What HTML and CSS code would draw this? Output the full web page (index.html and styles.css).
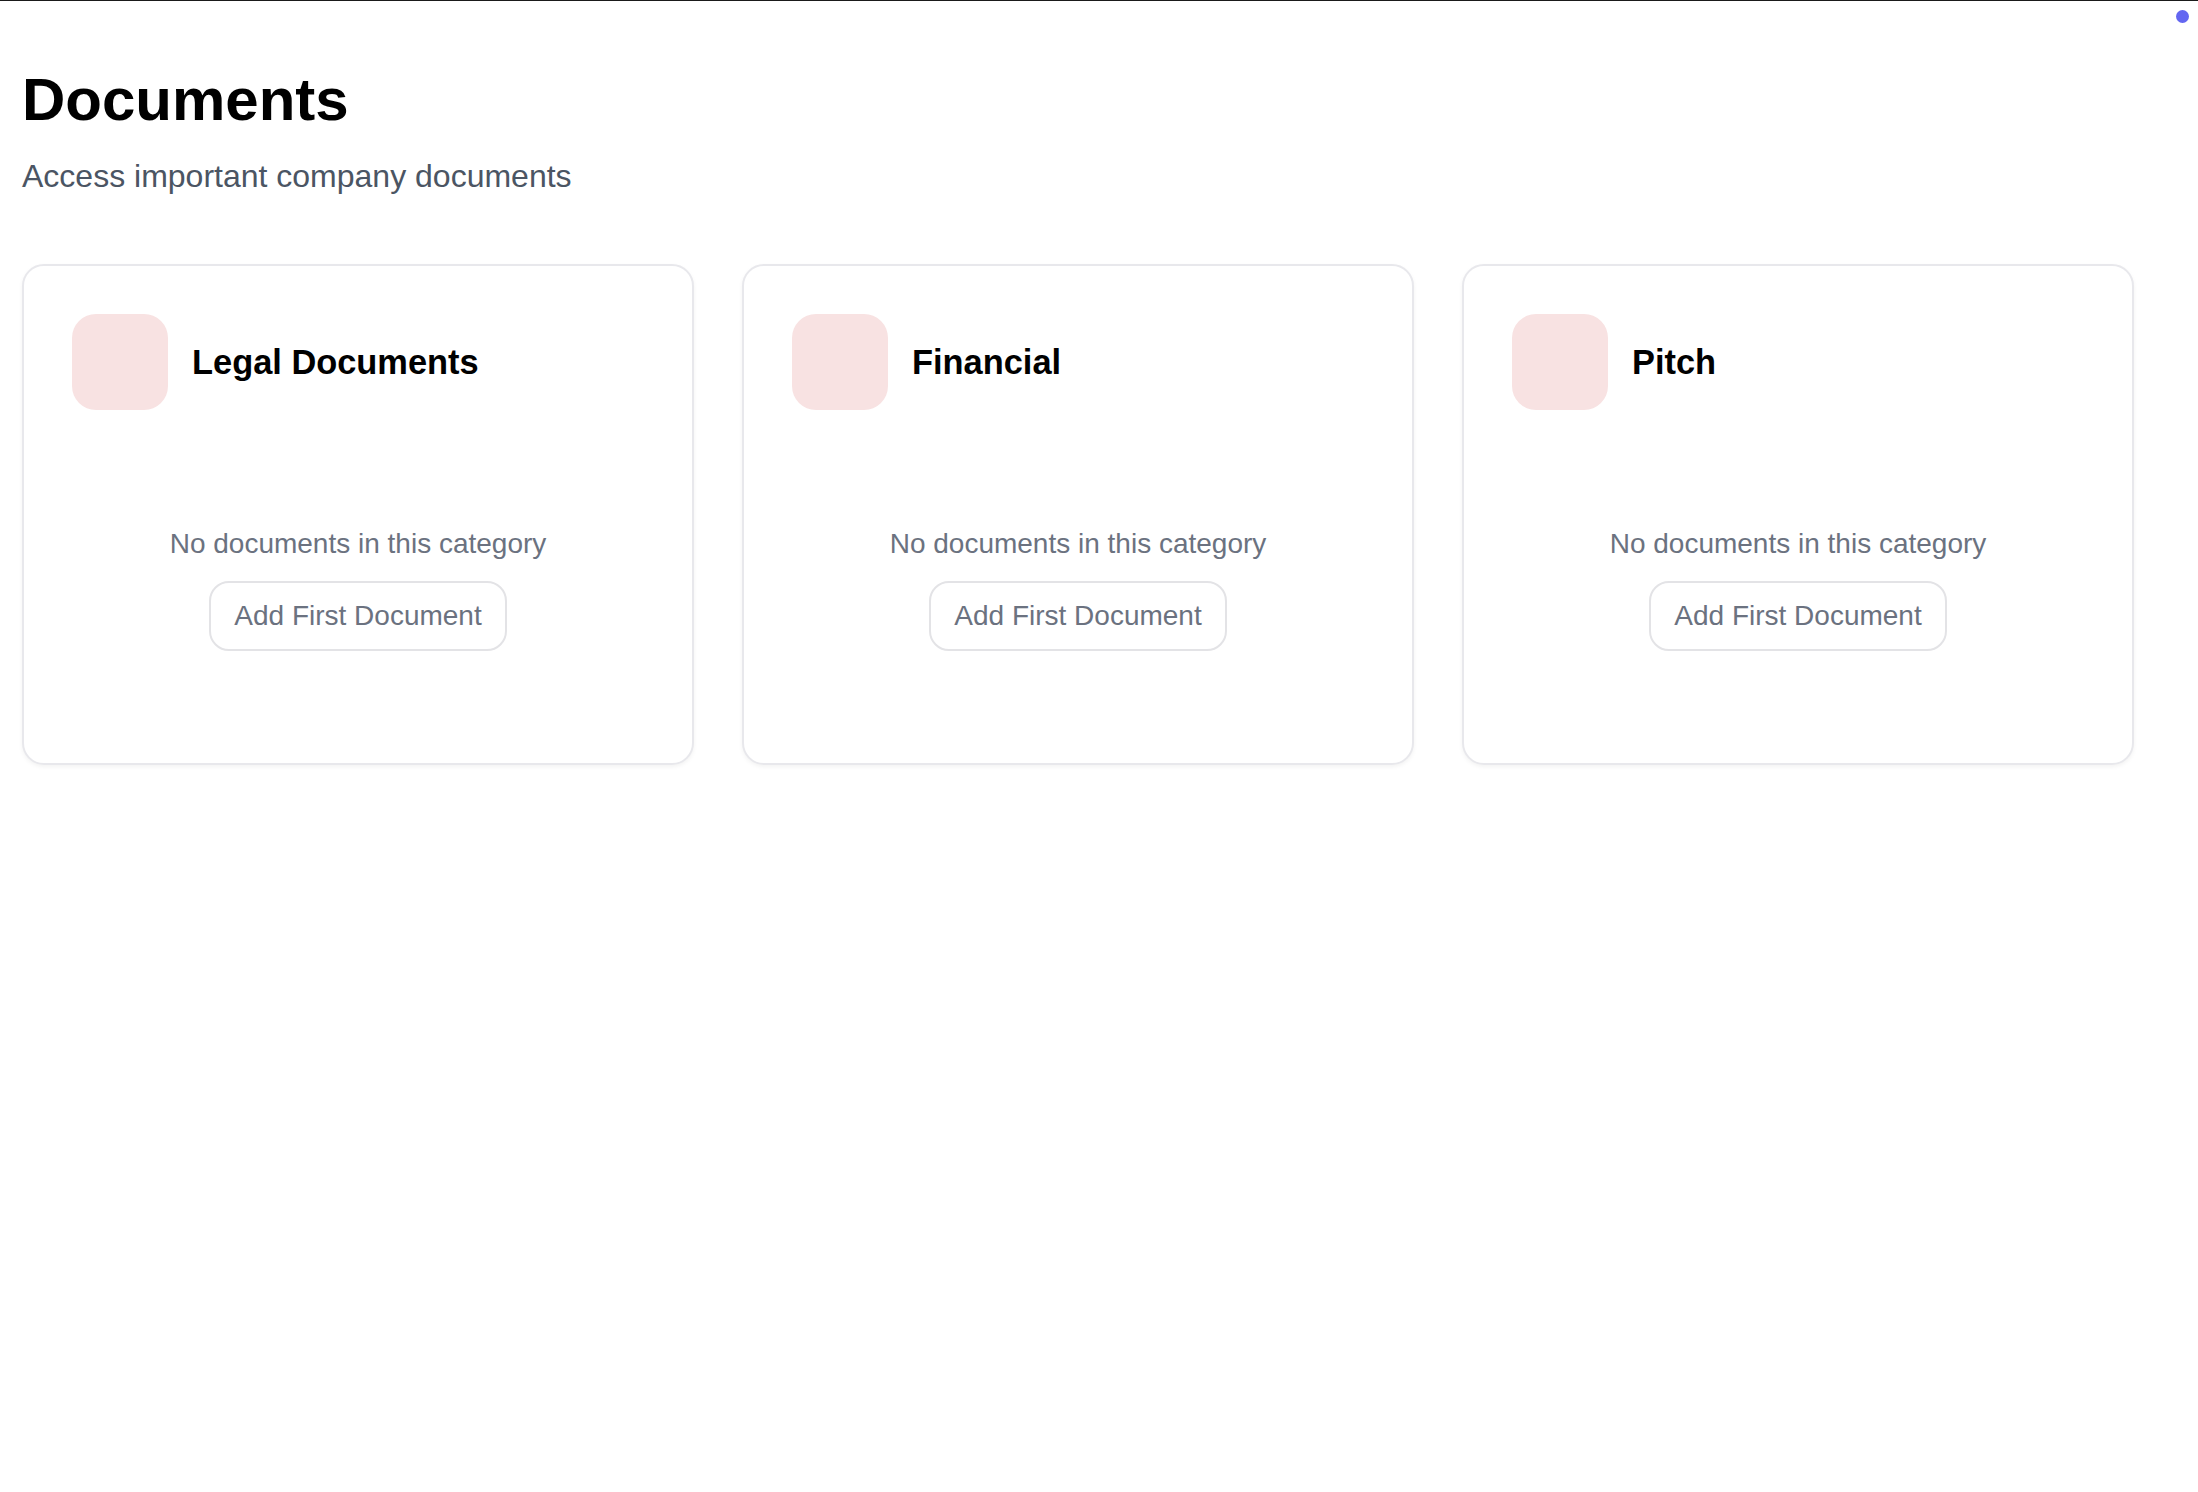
FILE: index.html
```html
<!DOCTYPE html>
<html lang="en">
<head>
<meta charset="utf-8">
<title>Documents</title>
<link rel="stylesheet" href="styles.css">
</head>
<body>
<div class="topline"></div>
<span class="status-dot"></span>
<main class="page">
  <header class="page-header">
    <h1 class="page-title">Documents</h1>
    <p class="page-subtitle">Access important company documents</p>
  </header>
  <section class="cards">
    <article class="card">
      <div class="card-head">
        <div class="card-icon"></div>
        <h2 class="card-title">Legal Documents</h2>
      </div>
      <div class="empty">
        <p class="empty-text">No documents in this category</p>
        <button class="add-btn" type="button">Add First Document</button>
      </div>
    </article>
    <article class="card">
      <div class="card-head">
        <div class="card-icon"></div>
        <h2 class="card-title">Financial</h2>
      </div>
      <div class="empty">
        <p class="empty-text">No documents in this category</p>
        <button class="add-btn" type="button">Add First Document</button>
      </div>
    </article>
    <article class="card">
      <div class="card-head">
        <div class="card-icon"></div>
        <h2 class="card-title">Pitch</h2>
      </div>
      <div class="empty">
        <p class="empty-text">No documents in this category</p>
        <button class="add-btn" type="button">Add First Document</button>
      </div>
    </article>
  </section>
</main>
</body>
</html>
```

FILE: styles.css
```css
* { box-sizing: border-box; }

html, body {
  margin: 0;
  padding: 0;
  background: #ffffff;
}

body {
  font-family: "Liberation Sans", Arial, Helvetica, sans-serif;
  color: #000;
  position: relative;
  min-height: 1492px;
}

.topline {
  height: 1px;
  background: #1a1a1a;
}

.status-dot {
  position: absolute;
  top: 10px;
  left: 2176px;
  width: 13px;
  height: 13px;
  border-radius: 50%;
  background: #6366f1;
}

.page {
  padding: 63px 64px 0 22px;
}

.page-title {
  margin: 0;
  font-size: 60px;
  line-height: 72px;
  font-weight: 700;
  color: #000;
}

.page-subtitle {
  margin: 16px 0 0;
  font-size: 32px;
  line-height: 48px;
  color: #4b5563;
}

.cards {
  margin-top: 64px;
  display: grid;
  grid-template-columns: repeat(3, 1fr);
  gap: 48px;
}

.card {
  border: 2px solid #e8e8ec;
  border-radius: 22px;
  padding: 48px;
  background: #fff;
  box-shadow: 0 2px 4px rgba(0, 0, 0, 0.05);
}

.card-head {
  display: flex;
  align-items: center;
  gap: 24px;
}

.card-icon {
  width: 96px;
  height: 96px;
  border-radius: 24px;
  background: #f8e2e2;
  flex: none;
}

.card-title {
  margin: 0;
  font-size: 34.4px;
  line-height: 42px;
  font-weight: 700;
  color: #000;
}

.empty {
  margin-top: 50px;
  padding: 63px 0 64px;
  display: flex;
  flex-direction: column;
  align-items: center;
  gap: 16px;
}

.empty-text {
  margin: 0;
  font-size: 28px;
  line-height: 42px;
  color: #6b7280;
}

.add-btn {
  font-family: "Liberation Sans", Arial, Helvetica, sans-serif;
  font-size: 28px;
  line-height: 42px;
  color: #6b7280;
  background: #fff;
  border: 2px solid #e3e3e6;
  border-radius: 20px;
  padding: 12px 23px;
  cursor: pointer;
}
```
